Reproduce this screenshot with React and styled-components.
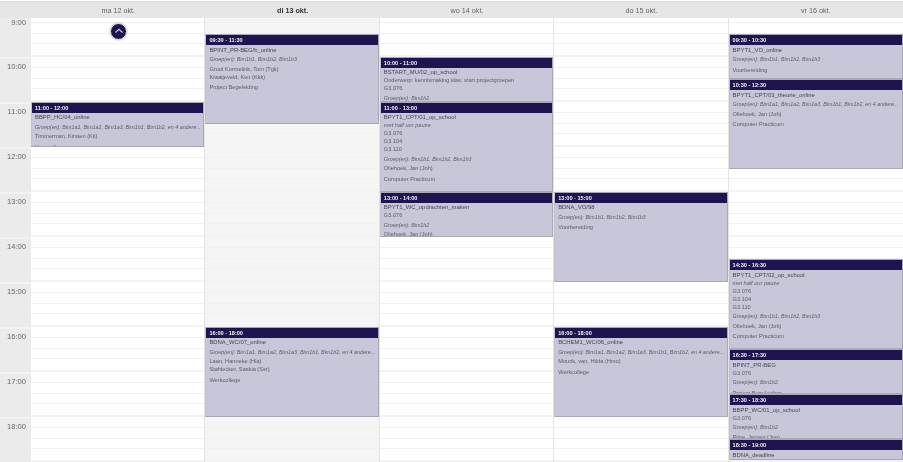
import React from "react";
import styled, { createGlobalStyle } from "styled-components";

const Global = createGlobalStyle`
  html, body { margin: 0; padding: 0; background: #fff; overflow: hidden; }
  #root { width: 903px; height: 462px; overflow: hidden; }
`;

const HOUR = 45;
const ORIGIN = -6;

const Page = styled.div`
  width: 903px;
  height: 462px;
  overflow: hidden;
  display: flex;
  flex-direction: column;
  background: #fff;
  font-family: "Liberation Sans", Arial, sans-serif;
  filter: blur(0.4px);
`;
const Header = styled.header`
  display: grid;
  grid-template-columns: 31px repeat(5, 1fr);
  height: 17px;
  flex: none;
  margin-top: 1px;
  background: #e6e6e6;
  border-top: 1px solid #dcdcdc;
  box-sizing: border-box;
`;
const DayTitle = styled.div`
  display: flex;
  align-items: center;
  justify-content: center;
  font-size: 7.2px;
  color: ${(p) => (p.$today ? "#333" : "#666")};
  font-weight: ${(p) => (p.$today ? 700 : 400)};
`;
const Body = styled.div`
  flex: 1;
  display: grid;
  grid-template-columns: 31px repeat(5, 1fr);
  min-height: 0;
`;
const TimeColumn = styled.div`
  background: #ebebeb;
  overflow: hidden;
`;
const TimeCell = styled.div`
  height: ${HOUR}px;
  box-sizing: border-box;
  border-top: 2px solid #f3f3f3;
  padding: 3px 5px 0 0;
  text-align: right;
  font-size: 7.6px;
  line-height: 9px;
  color: #666;
  &:first-child {
    height: ${HOUR + ORIGIN}px;
    border-top: 0;
    padding-top: 0;
  }
`;
const DayColumn = styled.div`
  position: relative;
  overflow: hidden;
  background: ${(p) => (p.$today ? "#f5f5f5" : "#fff")};
  border-right: 1px solid #e4e4e4;
  &:last-child { border-right: 0; }
`;
const Grid = styled.div`
  margin-top: ${ORIGIN}px;
`;
const HourBlock = styled.div`
  height: ${HOUR}px;
  box-sizing: border-box;
  border-bottom: 2px solid #f3f3f3;
  display: grid;
  grid-template-rows: repeat(4, 1fr);
`;
const Quarter = styled.div`
  border-bottom: 1px solid #f1f1f1;
  &:last-child { border-bottom: 0; }
`;
const Event = styled.article`
  position: absolute;
  left: 0;
  right: 0;
  box-sizing: border-box;
  background: #c8c7da;
  border: 1px solid #a9a9b6;
  border-left-color: #c0c0cf;
  overflow: hidden;
`;
const EventTime = styled.div`
  background: #201450;
  color: #f2f2f6;
  font-size: 5.6px;
  font-weight: 700;
  height: 10px;
  line-height: 10px;
  padding-left: 3px;
`;
const EventBody = styled.div`
  padding: 0.5px 3px 0 3px;
  font-size: 5.65px;
  line-height: 8px;
  color: #5c5c66;
`;
const Title = styled.div`
  font-size: 5.9px;
  color: #45454f;
  white-space: nowrap;
`;
const Note = styled.div`
  font-style: italic;
`;
const Line = styled.div`
  white-space: nowrap;
`;
const Groups = styled.div`
  font-size: 5.35px;
  font-style: italic;
  margin: 1.5px 0;
  white-space: nowrap;
  overflow: hidden;
`;
const Description = styled.div`
  margin-top: 2.5px;
`;
const ScrollButton = styled.button`
  position: absolute;
  left: 79px;
  top: 4.5px;
  width: 17px;
  height: 17px;
  padding: 0;
  border: 1px solid #eeeef4;
  border-radius: 50%;
  background: #201450;
  box-shadow: 0 0 2px rgba(0, 0, 0, 0.35);
  display: flex;
  align-items: center;
  justify-content: center;
`;

const G3 = "Bim1b1, Bim1b2, Bim1b3";
const G7 = "Bim1a1, Bim1a2, Bim1a3, Bim1b1, Bim1b2, en 4 andere...";
const days = [
  { label: "ma 12 okt.", events: [
    { s: 11, e: 12, t: "11:00 - 12:00", title: "BBPP_HC/04_online", groups: G7, people: ["Timmerman, Kirsten (Kti)"], desc: "Hoorcollege" },
  ] },
  { label: "di 13 okt.", today: true, events: [
    { s: 9.5, e: 11.5, t: "09:30 - 11:30", title: "BPINT_PR-BEG/b_online", groups: G3, people: ["Groot Kormelink, Tom (Tgk)", "Kraaijeveld, Ken (Kkk)"], desc: "Project Begeleiding" },
    { s: 16, e: 18, t: "16:00 - 18:00", title: "BDNA_WC/07_online", groups: G7, people: ["Laan, Hanneke (Hla)", "Stahlecker, Saskia (Ssr)"], desc: "Werkcollege" },
  ] },
  { label: "wo 14 okt.", events: [
    { s: 10, e: 11, t: "10:00 - 11:00", title: "BSTART_MU/02_op_school", lines: ["Onderwerp: kennismaking klas; start projectgroepen", "G3.076"], groups: "Bim1b2" },
    { s: 11, e: 13, t: "11:00 - 13:00", title: "BPYT1_CPT/01_op_school", note: "met half uur pauze", lines: ["G3.076", "G3.104", "G3.110"], groups: G3, people: ["Oliehoek, Jan (Joh)"], desc: "Computer Practicum" },
    { s: 13, e: 14, t: "13:00 - 14:00", title: "BPYT1_WC_opdrachten_maken", lines: ["G3.076"], groups: "Bim1b2", people: ["Oliehoek, Jan (Joh)"] },
  ] },
  { label: "do 15 okt.", events: [
    { s: 13, e: 15, t: "13:00 - 15:00", title: "BDNA_VO/98", groups: G3, desc: "Voorbereiding" },
    { s: 16, e: 18, t: "16:00 - 18:00", title: "BCHEM1_WC/06_online", groups: G7, people: ["Mourik, van, Hilda (Hmo)"], desc: "Werkcollege" },
  ] },
  { label: "vr 16 okt.", events: [
    { s: 9.5, e: 10.5, t: "09:30 - 10:30", title: "BPYT1_VO_online", groups: G3, desc: "Voorbereiding" },
    { s: 10.5, e: 12.5, t: "10:30 - 12:30", title: "BPYT1_CPT/03_theorie_online", groups: G7, people: ["Oliehoek, Jan (Joh)"], desc: "Computer Practicum" },
    { s: 14.5, e: 16.5, t: "14:30 - 16:30", title: "BPYT1_CPT/02_op_school", note: "met half uur pauze", lines: ["G3.076", "G3.104", "G3.110"], groups: G3, people: ["Oliehoek, Jan (Joh)"], desc: "Computer Practicum" },
    { s: 16.5, e: 17.5, t: "16:30 - 17:30", title: "BPINT_PR-BEG", lines: ["G3.076"], groups: "Bim1b2", desc: "Project Begeleiding" },
    { s: 17.5, e: 18.5, t: "17:30 - 18:30", title: "BBPP_WC/01_op_school", lines: ["G3.076"], groups: "Bim1b2", people: ["Pijpe, Jeroen (Jpe)"] },
    { s: 18.5, e: 18.97, t: "18:30 - 19:00", title: "BDNA_deadline" },
  ] },
];
const labels = [9, 10, 11, 12, 13, 14, 15, 16, 17, 18];
const hours = [...labels, 19];

export default function App() {
  return (
    <Page>
      <Global />
      <Header>
        <div />
        {days.map((d) => (
          <DayTitle key={d.label} $today={d.today}>{d.label}</DayTitle>
        ))}
      </Header>
      <Body>
        <TimeColumn>
          {labels.map((h) => (
            <TimeCell key={h}>{h}:00</TimeCell>
          ))}
        </TimeColumn>
        {days.map((d, i) => (
          <DayColumn key={d.label} $today={d.today}>
            <Grid>
              {hours.map((h) => (
                <HourBlock key={h}>
                  <Quarter /><Quarter /><Quarter /><Quarter />
                </HourBlock>
              ))}
            </Grid>
            {d.events.map((ev) => (
              <Event
                key={ev.t}
                style={{
                  top: (ev.s - 9) * HOUR + ORIGIN - 0.5,
                  height: (ev.e - ev.s) * HOUR,
                }}
              >
                <EventTime>{ev.t}</EventTime>
                <EventBody>
                  <Title>{ev.title}</Title>
                  {ev.note && <Note>{ev.note}</Note>}
                  {ev.lines && ev.lines.map((l) => <Line key={l}>{l}</Line>)}
                  {ev.groups && <Groups>Groep(en): {ev.groups}</Groups>}
                  {ev.people && ev.people.map((p) => <Line key={p}>{p}</Line>)}
                  {ev.desc && <Description>{ev.desc}</Description>}
                </EventBody>
              </Event>
            ))}
            {i === 0 && (
              <ScrollButton aria-label="Omhoog">
                <svg width="12" height="12" viewBox="0 0 12 12" fill="none" stroke="#c8c7da" strokeWidth="1.2">
                  <path d="M2.5 7.5 L6 4.3 L9.5 7.5" />
                </svg>
              </ScrollButton>
            )}
          </DayColumn>
        ))}
      </Body>
    </Page>
  );
}
